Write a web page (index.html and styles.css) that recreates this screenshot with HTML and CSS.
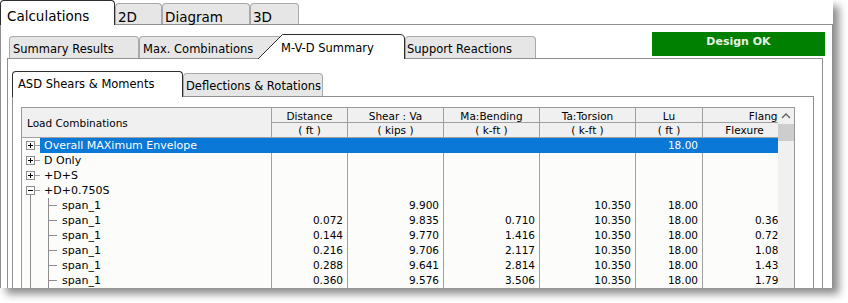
FILE: index.html
```html
<!DOCTYPE html>
<html lang="en">
<head>
    <meta charset="UTF-8">
    <title>Calculations - M-V-D Summary</title>
    <link rel="stylesheet" href="styles.css">
</head>
<body>
    <div class="window">
        <div class="tabs tabs-main">
            <div class="tab active tab-calc">Calculations</div>
            <div class="tab tab-2d">2D</div>
            <div class="tab tab-diagram">Diagram</div>
            <div class="tab tab-3d">3D</div>
        </div>

        <div class="panel panel-main">
            <div class="tabs tabs-sub">
                <div class="tab tab-summary">Summary Results</div>
                <div class="tab tab-max">Max. Combinations</div>
                <div class="tab active tab-mvd">
                    <svg class="tab-shape" width="147" height="25" viewBox="0 0 147 25">
                        <path d="M0 25 L24.5 0.5 H142 Q146.5 0.5 146.5 5 V25" fill="#fff" stroke="#2d2d2d"/>
                    </svg>
                    <span class="tab-text">M-V-D Summary</span>
                </div>
                <div class="tab tab-support">Support Reactions</div>
                <div class="status">Design OK</div>
            </div>

            <div class="panel panel-sub">
                <div class="tabs tabs-inner">
                    <div class="tab active tab-asd">ASD Shears &amp; Moments</div>
                    <div class="tab tab-defl">Deflections &amp; Rotations</div>
                </div>

                <div class="panel panel-inner">
                    <div class="grid">
                        <div class="grid-main">
                            <div class="grid-head">
                                <div class="hc hc-load">Load Combinations</div>
                                <div class="hc">Distance</div>
                                <div class="hc">Shear : Va</div>
                                <div class="hc">Ma:Bending</div>
                                <div class="hc">Ta:Torsion</div>
                                <div class="hc">Lu</div>
                                <div class="hc hc-flange">Flange</div>
                                <div class="hc unit">( ft )</div>
                                <div class="hc unit">( kips )</div>
                                <div class="hc unit">( k-ft )</div>
                                <div class="hc unit">( k-ft )</div>
                                <div class="hc unit">( ft )</div>
                                <div class="hc unit">Flexure</div>
                            </div>

                            <div class="row selected">
                                <div class="c tree">
                                    <svg class="exp" width="14" height="9" viewBox="0 0 14 9"><rect x="0.5" y="0.5" width="8" height="8" fill="#fff" stroke="#8e8e8e"/><path d="M2 4.5h5M4.5 2v5" stroke="#000"/><path d="M9 4.5h5" stroke="#a0a0a0"/></svg>
                                    <span class="label">Overall MAXimum Envelope</span>
                                </div>
                                <div class="c"></div><div class="c"></div><div class="c"></div><div class="c"></div>
                                <div class="c">18.00</div><div class="c flange"></div>
                            </div>
                            <div class="row">
                                <div class="c tree">
                                    <svg class="exp" width="14" height="9" viewBox="0 0 14 9"><rect x="0.5" y="0.5" width="8" height="8" fill="#fff" stroke="#8e8e8e"/><path d="M2 4.5h5M4.5 2v5" stroke="#000"/><path d="M9 4.5h5" stroke="#a0a0a0"/></svg>
                                    <span class="label">D Only</span>
                                </div>
                                <div class="c"></div><div class="c"></div><div class="c"></div><div class="c"></div><div class="c"></div><div class="c flange"></div>
                            </div>
                            <div class="row">
                                <div class="c tree">
                                    <svg class="exp" width="14" height="9" viewBox="0 0 14 9"><rect x="0.5" y="0.5" width="8" height="8" fill="#fff" stroke="#8e8e8e"/><path d="M2 4.5h5M4.5 2v5" stroke="#000"/><path d="M9 4.5h5" stroke="#a0a0a0"/></svg>
                                    <span class="label">+D+S</span>
                                </div>
                                <div class="c"></div><div class="c"></div><div class="c"></div><div class="c"></div><div class="c"></div><div class="c flange"></div>
                            </div>
                            <div class="row">
                                <div class="c tree open">
                                    <svg class="exp" width="14" height="9" viewBox="0 0 14 9"><rect x="0.5" y="0.5" width="8" height="8" fill="#fff" stroke="#8e8e8e"/><path d="M2 4.5h5" stroke="#000"/><path d="M9 4.5h5" stroke="#a0a0a0"/></svg>
                                    <span class="label">+D+0.750S</span>
                                </div>
                                <div class="c"></div><div class="c"></div><div class="c"></div><div class="c"></div><div class="c"></div><div class="c flange"></div>
                            </div>
                            <div class="row">
                                <div class="c tree leaf">span_1</div>
                                <div class="c"></div><div class="c">9.900</div><div class="c"></div>
                                <div class="c">10.350</div><div class="c">18.00</div><div class="c flange"></div>
                            </div>
                            <div class="row">
                                <div class="c tree leaf">span_1</div>
                                <div class="c">0.072</div><div class="c">9.835</div><div class="c">0.710</div>
                                <div class="c">10.350</div><div class="c">18.00</div><div class="c flange">0.361</div>
                            </div>
                            <div class="row">
                                <div class="c tree leaf">span_1</div>
                                <div class="c">0.144</div><div class="c">9.770</div><div class="c">1.416</div>
                                <div class="c">10.350</div><div class="c">18.00</div><div class="c flange">0.722</div>
                            </div>
                            <div class="row">
                                <div class="c tree leaf">span_1</div>
                                <div class="c">0.216</div><div class="c">9.706</div><div class="c">2.117</div>
                                <div class="c">10.350</div><div class="c">18.00</div><div class="c flange">1.080</div>
                            </div>
                            <div class="row">
                                <div class="c tree leaf">span_1</div>
                                <div class="c">0.288</div><div class="c">9.641</div><div class="c">2.814</div>
                                <div class="c">10.350</div><div class="c">18.00</div><div class="c flange">1.437</div>
                            </div>
                            <div class="row">
                                <div class="c tree leaf">span_1</div>
                                <div class="c">0.360</div><div class="c">9.576</div><div class="c">3.506</div>
                                <div class="c">10.350</div><div class="c">18.00</div><div class="c flange">1.790</div>
                            </div>
                            <div class="row">
                                <div class="c tree leaf">span_1</div>
                                <div class="c">0.432</div><div class="c">9.511</div><div class="c">4.193</div>
                                <div class="c">10.350</div><div class="c">18.00</div><div class="c flange">2.140</div>
                            </div>
                        </div>

                        <div class="scrollbar">
                            <svg class="arrow" width="16" height="15" viewBox="0 0 16 15"><path d="M4 10 L8 6 L12 10" fill="none" stroke="#606060" stroke-width="1.3"/></svg>
                            <div class="thumb"></div>
                        </div>
                    </div>
                </div>
            </div>
        </div>
    </div>
</body>
</html>
```

FILE: styles.css
```css
* {
    box-sizing: border-box;
}
body {
    margin: 0;
    min-height: 303px;
    background: #fff;
    font-family: "DejaVu Sans", Verdana, sans-serif;
    color: #000;
}
.window {
    width: 833px;
    height: 288px;
    overflow: hidden;
    background: #fff;
    box-shadow: 6px 6px 8px rgba(0, 0, 0, 0.45);
}

/* tabs */
.tabs {
    display: flex;
    align-items: flex-end;
}
.tab {
    position: relative;
    white-space: nowrap;
    background: #e6e6e6;
    border: 1px solid #a9a9a9;
    border-bottom: none;
    border-radius: 4px 4px 0 0;
    font-size: 11.5px;
    line-height: 14px;
}
.tab.active {
    background: #fff;
    border-color: #2d2d2d;
    margin-bottom: -1px;
    z-index: 1;
}
.panel {
    border: 1px solid #8f8f8f;
}

/* top level */
.tabs-main {
    height: 24px;
}
.tabs-main .tab {
    height: 21px;
    padding: 6px 0 0 2px;
    font-size: 13.5px;
    line-height: 15px;
}
.tabs-main .tab.active {
    height: 25px;
    padding: 8px 0 0 6px;
}
.tab-calc { width: 115px; }
.tab-2d { width: 47px; }
.tab-diagram { width: 88px; padding-left: 3px; }
.tab-3d { width: 49px; }

/* second level */
.tabs-sub {
    height: 26px;
    margin-top: 7px;
    padding: 0 7px 0 8px;
}
.tabs-sub .tab {
    height: 22px;
    padding: 5px 0 0 3px;
}
.tab-summary { width: 130px; }
.tab-max { width: 144px; }
.tabs-sub .tab-support {
    width: 131px;
    padding-left: 1px;
}
.tabs-sub .tab-mvd {
    width: 147px;
    height: 25px;
    margin-left: -25px;
    padding: 7px 0 0 23px;
    border: none;
    background: none;
}
.tab-shape {
    position: absolute;
    left: 0;
    top: 0;
}
.tab-text {
    position: relative;
}
.status {
    margin-left: auto;
    margin-bottom: 2px;
    width: 173px;
    height: 24px;
    padding-top: 3px;
    background: #008000;
    color: #e6f3e6;
    font-size: 11px;
    font-weight: bold;
    line-height: 14px;
    text-align: center;
}
.panel-sub {
    margin: 0 9px 0 6px;
}

/* third level */
.tabs-inner {
    height: 25px;
    margin-top: 12px;
    padding-left: 4px;
}
.tabs-inner .tab {
    height: 23px;
    padding: 5px 0 0 2px;
}
.tabs-inner .tab.active {
    height: 26px;
    padding-left: 5px;
}
.tab-asd { width: 171px; }
.tab-defl { width: 140px; }
.panel-inner {
    margin: 0 8px 0 4px;
    padding: 10px 18px 0 8px;
}

/* grid */
.grid {
    display: flex;
    border: 1px solid #999;
}
.grid-main {
    width: 756px;
    overflow: hidden;
    background: #fcfcfb;
}
.grid-head,
.row {
    display: grid;
    grid-template-columns: 250px 76px 96px 96px 96px 67px 84px;
}
.grid-head {
    background: #f0f0f0;
}
.hc {
    height: 15px;
    border-right: 1px solid #a0a0a0;
    border-bottom: 1px solid #a0a0a0;
    font-size: 10.5px;
    line-height: 16px;
    text-align: center;
    white-space: nowrap;
}
.hc.unit {
    line-height: 15px;
}
.hc-load {
    grid-row: span 2;
    height: 30px;
    padding: 8px 0 0 5px;
    line-height: 15px;
    text-align: left;
}
.hc-flange {
    text-align: right;
    padding-right: 2px;
}
.row {
    height: 15px;
    font-size: 10.5px;
    line-height: 15px;
}
.c {
    border-right: 1px solid #a0a0a0;
    padding-right: 4px;
    text-align: right;
    white-space: nowrap;
}
.c.flange {
    padding-right: 1px;
}
.tree {
    display: flex;
    align-items: center;
    padding-left: 4px;
    padding-right: 0;
    font-size: 11px;
    text-align: left;
}
.exp {
    flex: none;
}
.label {
    padding-left: 4px;
}
.tree.open {
    background: linear-gradient(#8c8c8c, #8c8c8c) 8px 100% / 1px 3px no-repeat;
}
.tree.leaf {
    display: block;
    padding-left: 40px;
    background:
        linear-gradient(#8c8c8c, #8c8c8c) 8px 0 / 1px 100% no-repeat,
        linear-gradient(#8c8c8c, #8c8c8c) 26px 0 / 1px 100% no-repeat,
        linear-gradient(#8c8c8c, #8c8c8c) 27px 7px / 8px 1px no-repeat;
}
.row.selected .c {
    background: #0a78d7;
    border-color: #0a78d7;
    color: #fff;
}
.row.selected .tree {
    background: #fcfcfb;
}
.row.selected .label {
    flex: 1;
    align-self: stretch;
    background: #0a78d7;
    color: #fff;
}

/* scrollbar */
.scrollbar {
    width: 16px;
    background: #f0f0f0;
}
.arrow {
    display: block;
}
.thumb {
    height: 17px;
    margin-top: 1px;
    background: #cdcdcd;
}
```
